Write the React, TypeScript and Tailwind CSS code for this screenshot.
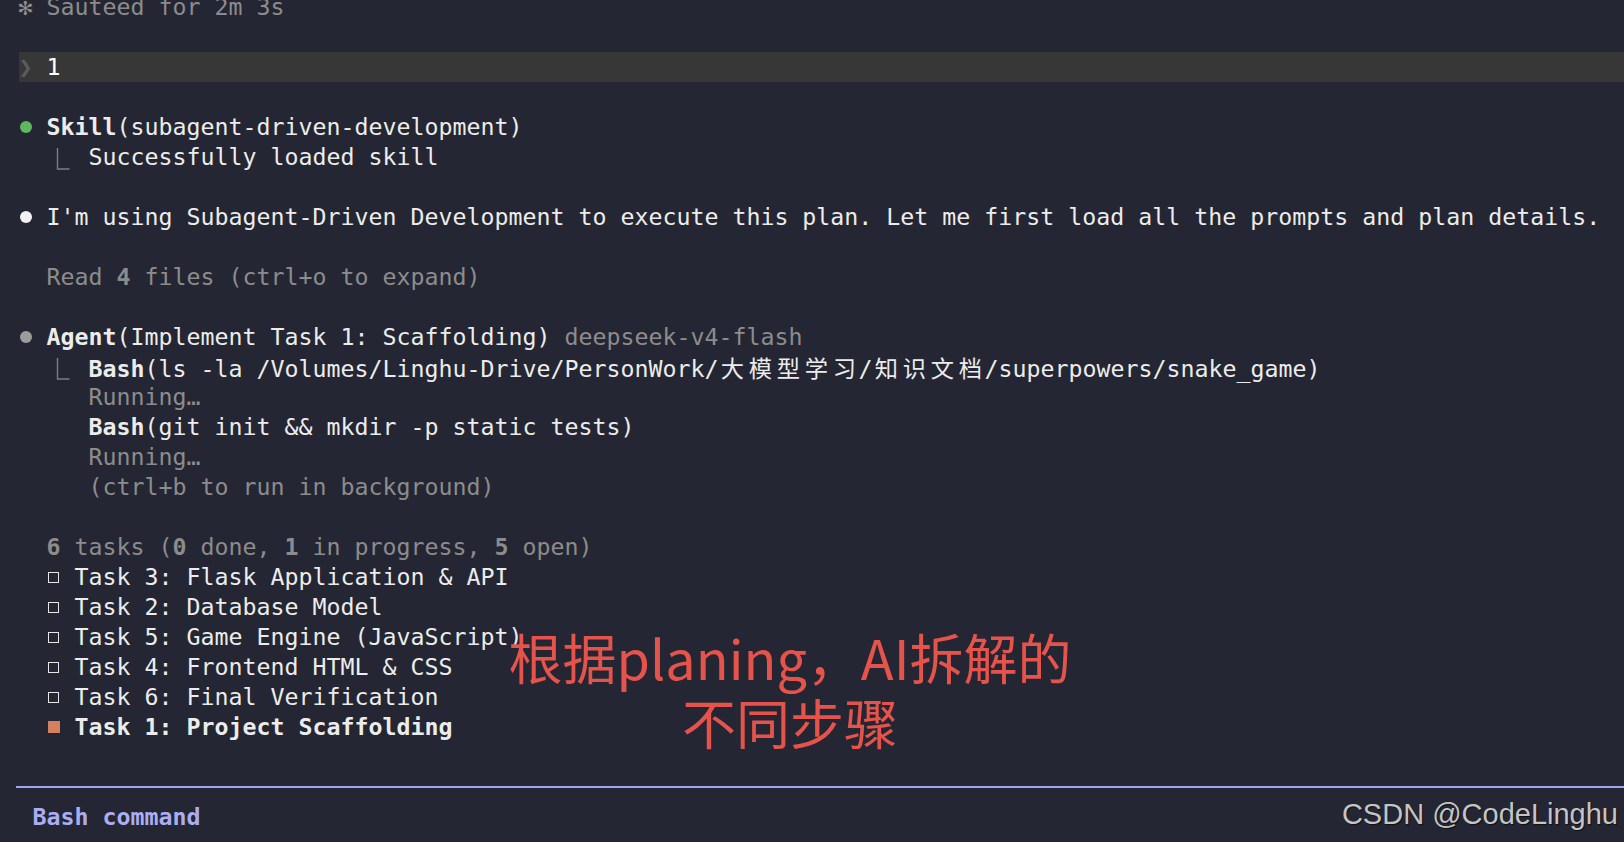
import React from 'react';

const MONO = "font-['DejaVu_Sans_Mono','Noto_Sans_CJK_SC',monospace] text-[23.25px]";

const Line: React.FC<{ children?: React.ReactNode; className?: string }> = ({ children, className = '' }) => (
  <div className={`h-[30px] shrink-0 whitespace-pre leading-[30px] ${className}`}>{children}</div>
);

const Cell: React.FC<{ children?: React.ReactNode; className?: string }> = ({ children, className = '' }) => (
  <span className={`inline-flex h-[30px] w-[14px] items-center justify-center align-top ${className}`}>{children}</span>
);

// CJK glyphs take two terminal cells
const Wide: React.FC<{ text: string }> = ({ text }) => (
  <>
    {Array.from(text).map((ch, i) =>
      /[\u4e00-\u9fff]/.test(ch) ? (
        <span key={i} className="inline-block w-[28px] text-center font-['Noto_Sans_CJK_SC',sans-serif]">
          {ch}
        </span>
      ) : (
        <span key={i}>{ch}</span>
      )
    )}
  </>
);

const Elbow = () => (
  <span className="inline-block h-[30px] w-[28px] align-top">
    <svg width="28" height="30" viewBox="0 0 28 30" className="block">
      <path d="M10.5 6 V27 H22.5" fill="none" stroke="#7d7d7d" strokeWidth="1.4" />
    </svg>
  </span>
);

const Dot: React.FC<{ color: string }> = ({ color }) => (
  <Cell>
    <span className={`block h-[12px] w-[12px] rounded-full ${color}`} />
  </Cell>
);

const tasks = [
  'Task 3: Flask Application & API',
  'Task 2: Database Model',
  'Task 5: Game Engine (JavaScript)',
  'Task 4: Frontend HTML & CSS',
  'Task 6: Final Verification',
];

export default function App() {
  return (
    <div className="relative h-[842px] w-full overflow-hidden bg-[#242733] text-[#ececec]">
      <div className={`-mt-2 flex flex-col pl-[18.5px] ${MONO}`}>
        <Line className="text-[#8c8c8c]">
          <Cell>✻</Cell> Sauteed for 2m 3s
        </Line>
        <Line />
        <Line className="bg-[#373737]">
          <Cell className="text-[#5b5b5b]">❯</Cell> <span className="text-white">1</span>
        </Line>
        <Line />
        <Line>
          <Dot color="bg-[#5cb85f]" /> <b className="font-bold">Skill</b>(subagent-driven-development)
        </Line>
        <Line>
          {'  '}
          <Elbow />
          {' '}Successfully loaded skill
        </Line>
        <Line />
        <Line>
          <Dot color="bg-[#f2f2f2]" /> I'm using Subagent-Driven Development to execute this plan. Let me first load all the prompts and plan details.
        </Line>
        <Line />
        <Line className="text-[#8c8c8c]">
          {'  '}Read <b className="font-bold">4</b> files (ctrl+o to expand)
        </Line>
        <Line />
        <Line>
          <Dot color="bg-[#9c9c9c]" /> <b className="font-bold">Agent</b>(Implement Task 1: Scaffolding){' '}
          <span className="text-[#8c8c8c]">deepseek-v4-flash</span>
        </Line>
        <Line>
          {'  '}
          <Elbow />
          {' '}<b className="font-bold">Bash</b>
          <Wide text="(ls -la /Volumes/Linghu-Drive/PersonWork/大模型学习/知识文档/superpowers/snake_game)" />
        </Line>
        <Line className="text-[#8c8c8c]">{'     '}Running…</Line>
        <Line>
          {'     '}<b className="font-bold">Bash</b>(git init && mkdir -p static tests)
        </Line>
        <Line className="text-[#8c8c8c]">{'     '}Running…</Line>
        <Line className="text-[#8c8c8c]">{'     '}(ctrl+b to run in background)</Line>
        <Line />
        <Line className="text-[#8c8c8c]">
          {'  '}<b className="font-bold">6</b> tasks (<b className="font-bold">0</b> done, <b className="font-bold">1</b> in progress,{' '}
          <b className="font-bold">5</b> open)
        </Line>
        {tasks.map((t) => (
          <Line key={t}>
            {'  '}
            <Cell>
              <span className="block h-[11px] w-[11px] border-[1.5px] border-[#e6e6e6]" />
            </Cell>
            {' '}
            {t}
          </Line>
        ))}
        <Line>
          {'  '}
          <Cell>
            <span className="block h-[12px] w-[12px] bg-[#d4805f]" />
          </Cell>
          {' '}
          <b className="font-bold">Task 1: Project Scaffolding</b>
        </Line>
        <Line />
        <div className="flex h-[30px] items-center">
          <div className="-ml-[2.5px] h-[2px] flex-1 bg-[#a0a4ea]" />
        </div>
        <Line className="font-bold text-[#abaef2]">{' '}Bash command</Line>
      </div>

      {/* handwritten-style annotation over the screenshot */}
      <div className="absolute left-[490px] top-[624px] w-[600px] whitespace-nowrap text-center font-['Noto_Sans_CJK_SC',sans-serif] text-[54px] leading-[65px] text-[#e6534b]">
        <div>根据planing，AI拆解的</div>
        <div>不同步骤</div>
      </div>

      <div className="absolute right-[6px] top-[795px] font-['Liberation_Sans',Arial,sans-serif] text-[29px] leading-[38px] text-[#c4c4c4] [text-shadow:1px_1px_1px_rgba(0,0,0,0.6)]">
        CSDN @CodeLinghu
      </div>
    </div>
  );
}
